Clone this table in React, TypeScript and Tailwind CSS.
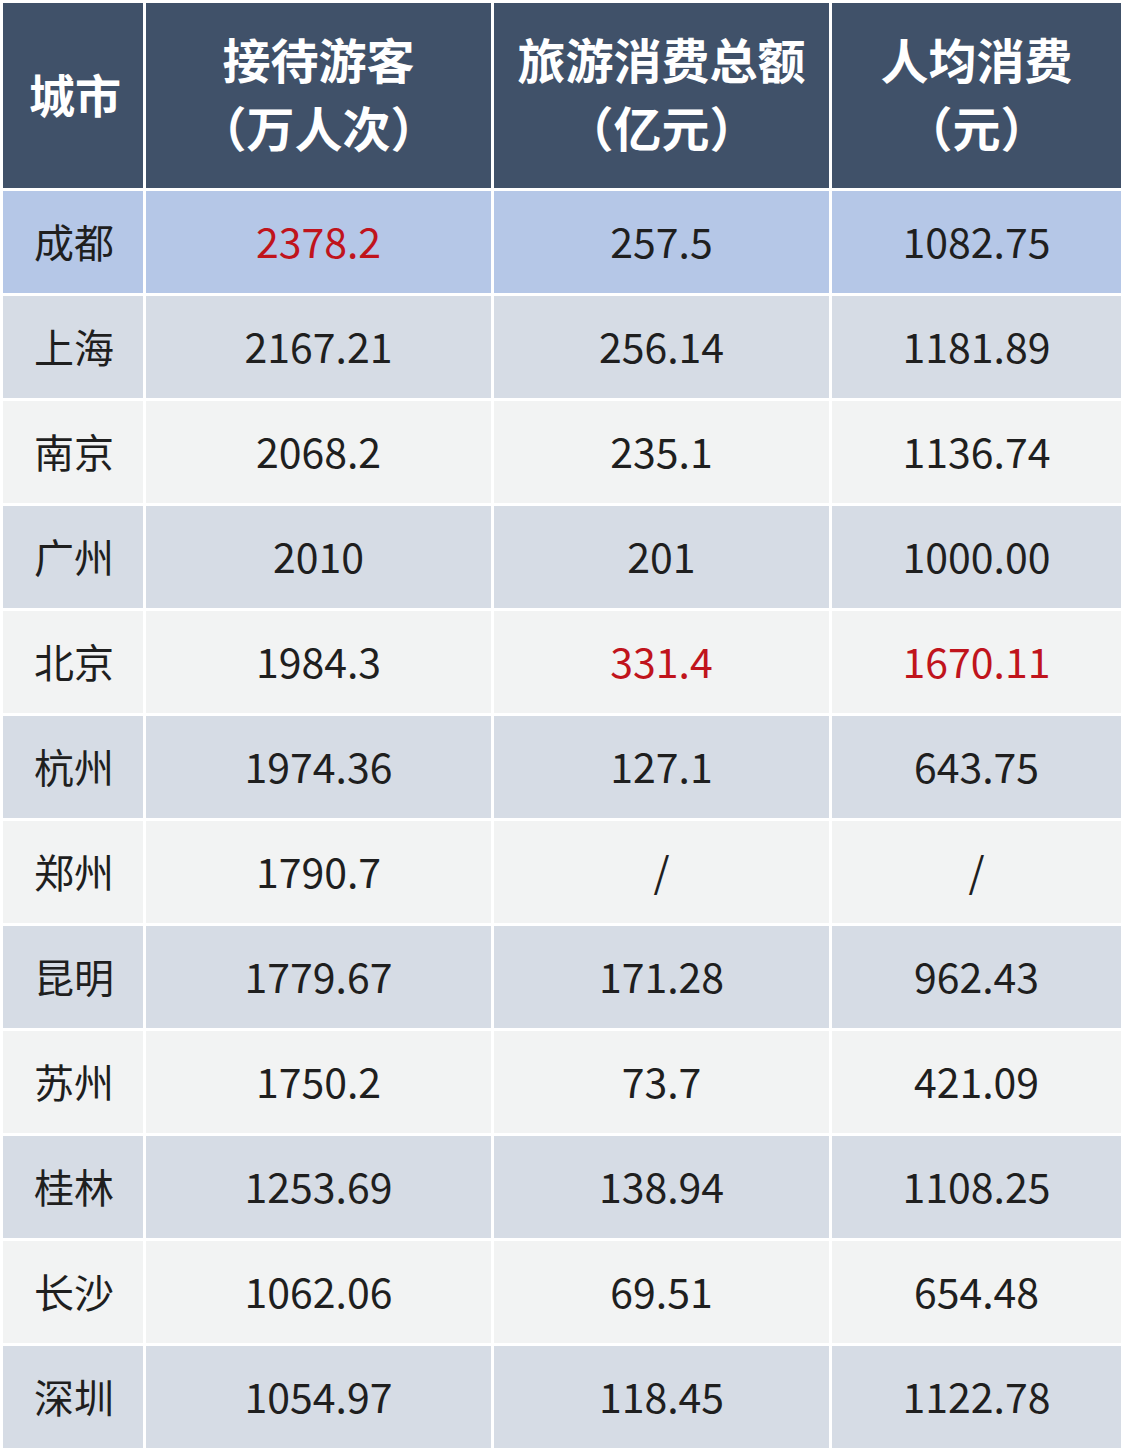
const rows: { city: string; visitors: string; total: string; perCapita: string; red?: number[] }[] = [
  { city: "成都", visitors: "2378.2", total: "257.5", perCapita: "1082.75", red: [1] },
  { city: "上海", visitors: "2167.21", total: "256.14", perCapita: "1181.89" },
  { city: "南京", visitors: "2068.2", total: "235.1", perCapita: "1136.74" },
  { city: "广州", visitors: "2010", total: "201", perCapita: "1000.00" },
  { city: "北京", visitors: "1984.3", total: "331.4", perCapita: "1670.11", red: [2, 3] },
  { city: "杭州", visitors: "1974.36", total: "127.1", perCapita: "643.75" },
  { city: "郑州", visitors: "1790.7", total: "/", perCapita: "/" },
  { city: "昆明", visitors: "1779.67", total: "171.28", perCapita: "962.43" },
  { city: "苏州", visitors: "1750.2", total: "73.7", perCapita: "421.09" },
  { city: "桂林", visitors: "1253.69", total: "138.94", perCapita: "1108.25" },
  { city: "长沙", visitors: "1062.06", total: "69.51", perCapita: "654.48" },
  { city: "深圳", visitors: "1054.97", total: "118.45", perCapita: "1122.78" },
]

const font = { fontFamily: '"Noto Sans CJK SC", "Noto Sans", sans-serif' }

export default function App() {
  return (
    <div className="min-h-screen bg-white p-[3px]" style={font}>
      <div className="grid grid-cols-[140px_345px_335px_289px] gap-[3px] bg-white">
        {/* header */}
        <div className="h-[185px] bg-[#405169] flex items-center pl-[26px] pb-[4px] text-[46px] font-bold text-white">
          城市
        </div>
        <HeaderCell top="接待游客" bottom="（万人次）" />
        <HeaderCell top="旅游消费总额" bottom="（亿元）" />
        <HeaderCell top="人均消费" bottom="（元）" />

        {rows.map((r, i) => {
          const bg = i === 0 ? "bg-[#b5c7e7]" : i % 2 === 1 ? "bg-[#d6dce5]" : "bg-[#f2f3f3]"
          const values = [r.visitors, r.total, r.perCapita]
          return (
            <div key={r.city} className="contents">
              <div className={`h-[102px] ${bg} flex items-center pl-[31px] pb-[3px] text-[40px] text-[#1f1f1f]`}>
                {r.city}
              </div>
              {values.map((v, j) => (
                <div
                  key={j}
                  className={`h-[102px] ${bg} flex items-center justify-center pb-[3px] text-[41px] ${
                    r.red?.includes(j + 1) ? "text-[#c0141c]" : "text-[#1f1f1f]"
                  }`}
                >
                  {v}
                </div>
              ))}
            </div>
          )
        })}
      </div>
    </div>
  )
}

function HeaderCell({ top, bottom }: { top: string; bottom: string }) {
  return (
    <div className="h-[185px] bg-[#405169] flex flex-col items-center justify-center text-white font-bold text-[48px] leading-[68px] pb-[8px]">
      <span>{top}</span>
      <span>{bottom}</span>
    </div>
  )
}
